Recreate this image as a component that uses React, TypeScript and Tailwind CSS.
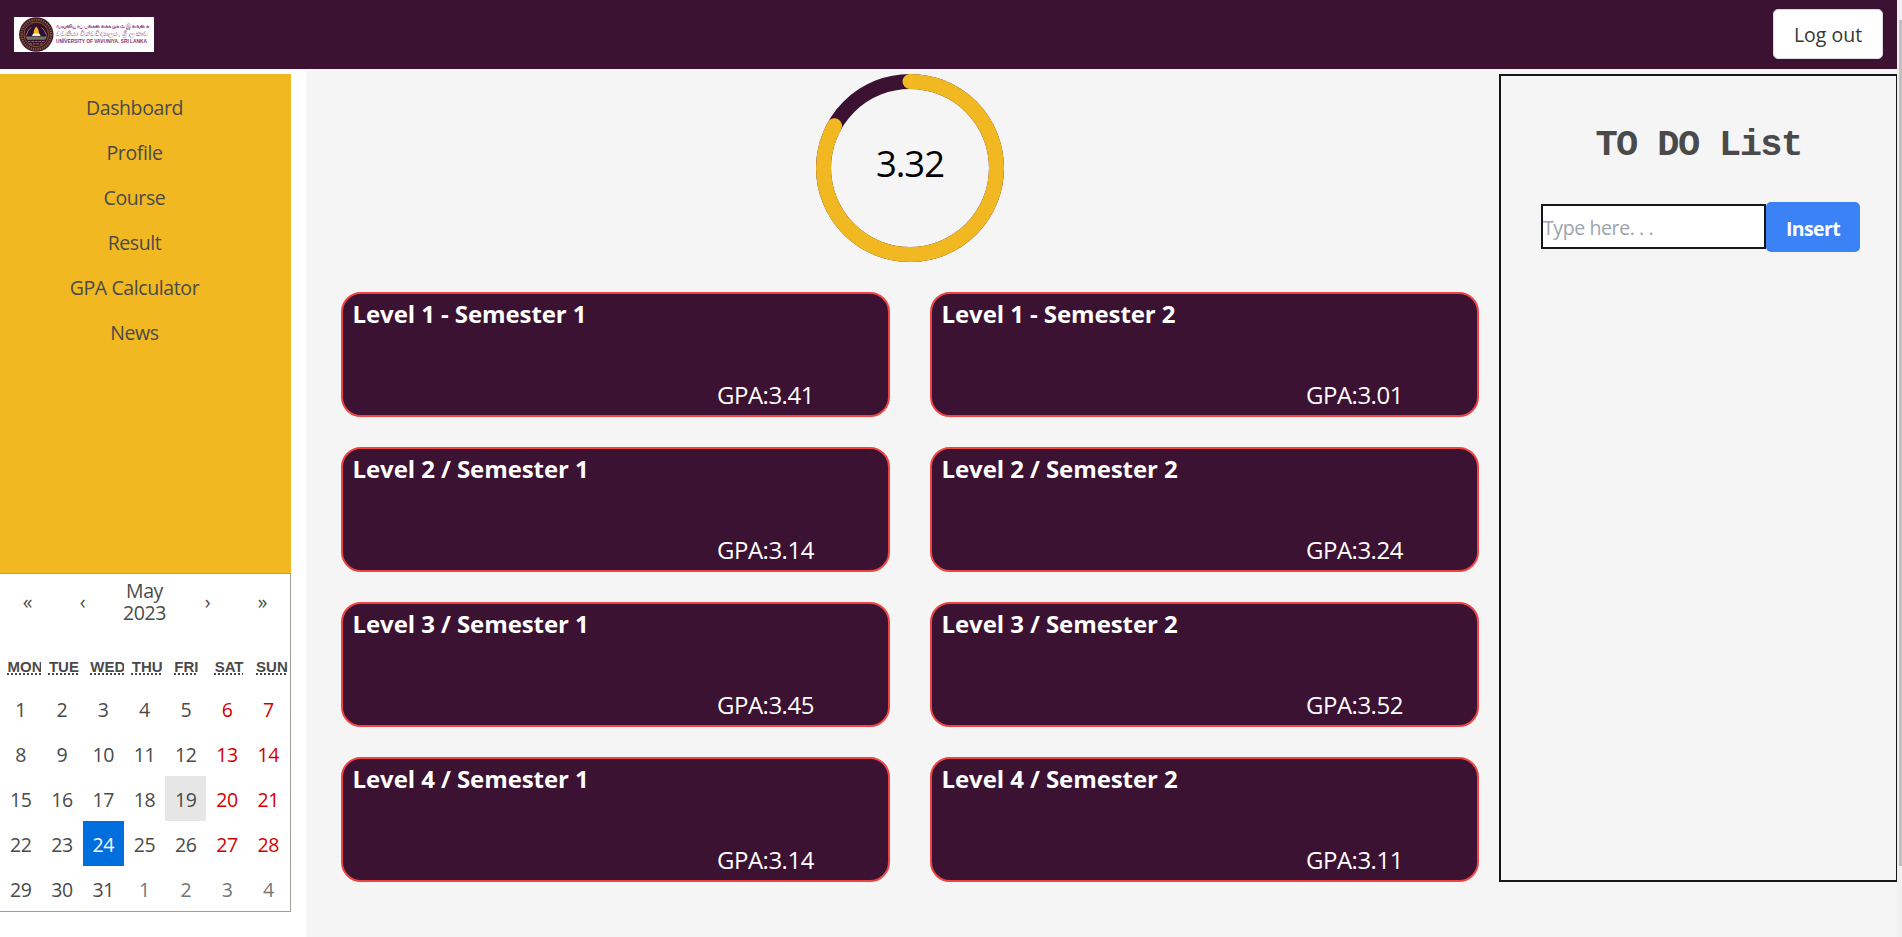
import React from 'react';

const navItems = ['Dashboard', 'Profile', 'Course', 'Result', 'GPA Calculator', 'News'];

const semesters = [
  { title: 'Level 1 - Semester 1', gpa: '3.41' },
  { title: 'Level 1 - Semester 2', gpa: '3.01' },
  { title: 'Level 2 / Semester 1', gpa: '3.14' },
  { title: 'Level 2 / Semester 2', gpa: '3.24' },
  { title: 'Level 3 / Semester 1', gpa: '3.45' },
  { title: 'Level 3 / Semester 2', gpa: '3.52' },
  { title: 'Level 4 / Semester 1', gpa: '3.14' },
  { title: 'Level 4 / Semester 2', gpa: '3.11' },
];

const weekdays = ['MON', 'TUE', 'WED', 'THU', 'FRI', 'SAT', 'SUN'];

const days = Array.from({ length: 35 }, (_, i) => ({
  label: i < 31 ? i + 1 : i - 30,
  outside: i >= 31,
  weekend: i % 7 > 4,
}));

function dayClass(day: { label: number; outside: boolean; weekend: boolean }) {
  if (day.outside) return 'text-[#757575]';
  if (day.label === 24) return 'bg-[#006edc] text-white';
  if (day.label === 19) return 'bg-[#e6e6e6]';
  if (day.weekend) return 'text-[#d10000]';
  return '';
}

function Logo() {
  return (
    <svg width="140" height="35" viewBox="0 0 140 35" className="block bg-white">
      <circle cx="22.3" cy="17.5" r="17.2" fill="#3c1a26" />
      <circle cx="22.3" cy="17.5" r="14.8" fill="none" stroke="#80583c" strokeWidth="2.2" strokeDasharray="1.3 1" />
      <circle cx="22.3" cy="17.5" r="12.3" fill="#3a0f2c" stroke="#94683c" strokeWidth="0.8" />
      <path d="M13 19a9.3 9.3 0 0 1 18.600 0z" fill="#2c1034" />
      <path d="M12 18.500q2-6 5-8M32.600 18.500q-2-6-5-8" fill="none" stroke="#b99a8a" strokeWidth="0.7" />
      <path d="M22.300 9.500c1.700 2.200 2.600 4 2.600 6v2.500h-5.200v-2.500c0-2 .9-3.800 2.600-6z" fill="#f5b820" />
      <path d="M19.200 16.500h6.200l1.200 2.500h-8.600z" fill="#fff3df" />
      <path d="M11.500 19.500h21.600l-1.800 3.300H13.300z" fill="#6d7765" />
      <path d="M14 24.500h16.600M15.500 26.800h13.600" stroke="#8d7440" strokeWidth="1.200" strokeDasharray="2.500 1" />
      <g fill="#86306f" className="tracking-normal">
        <text x="42" y="11" fontSize="5.6" fontWeight="700" textLength="93" lengthAdjust="spacingAndGlyphs">
          வவுனியாப் பல்கலைக்கழகம், இலங்கை
        </text>
        <text x="42" y="18.800" fontSize="6.6" textLength="92" lengthAdjust="spacingAndGlyphs">
          වවුනියා විශ්වවිද්‍යාලය, ශ්‍රී ලංකාව
        </text>
        <text x="42" y="26.200" fontSize="5.200" fontWeight="700" textLength="91" lengthAdjust="spacingAndGlyphs" className="font-['Liberation_Sans',sans-serif]">
          UNIVERSITY OF VAVUNIYA, SRI LANKA
        </text>
      </g>
    </svg>
  );
}

function Calendar() {
  return (
    <section className="h-[339px] border border-l-0 border-[#a0a096] bg-white">
      <div className="mb-5 grid h-[55px] grid-cols-[55px_55px_70px_55px_55px] items-center text-center">
        <button className="pt-px">«</button>
        <button className="pt-px">‹</button>
        <button className="flex flex-col items-center pt-px pr-px leading-[22px]">
          <span>May</span>
          <span>2023</span>
        </button>
        <button className="pt-px">›</button>
        <button className="pt-px">»</button>
      </div>
      <div className="grid h-[37px] grid-cols-7 text-center font-['Liberation_Sans',sans-serif] text-[15px] leading-[22px] font-bold tracking-normal">
        {weekdays.map((d) => (
          <div key={d} className="overflow-hidden px-[7.5px] pt-[7px]">
            <abbr className="underline decoration-dotted decoration-[1.5px] underline-offset-1">{d}</abbr>
          </div>
        ))}
      </div>
      <div className="grid w-[289px] auto-rows-[45px] grid-cols-7 text-center leading-[43px]">
        {days.map((day, i) => (
          <div key={i} className={`pt-0.5 ${dayClass(day)}`}>
            {day.label}
          </div>
        ))}
      </div>
    </section>
  );
}

function GpaRing({ gpa }: { gpa: number }) {
  const circumference = 2 * Math.PI * 86.5;
  return (
    <div className="grid size-[188px] place-items-center">
      <svg viewBox="0 0 188 188" className="col-start-1 row-start-1 size-full -rotate-90">
        <circle cx="94" cy="94" r="86.5" fill="none" stroke="#3b1232" strokeWidth="15" />
        <circle
          cx="94"
          cy="94"
          r="86.5"
          fill="none"
          stroke="#f1b821"
          strokeWidth="15"
          strokeLinecap="round"
          strokeDasharray={`${(circumference * gpa) / 4} ${circumference}`}
        />
      </svg>
      <span className="col-start-1 row-start-1 -mt-2.5 text-[36.5px] leading-none font-[380] tracking-[-1px] text-black">
        {gpa}
      </span>
    </div>
  );
}

export default function App() {
  return (
    <div className="flex h-[937px] overflow-hidden bg-[#f5f5f5] font-['Open_Sans','Noto_Sans',sans-serif] text-[19.5px] tracking-[-0.4px] text-[#4a4a4a]">
      <div className="flex w-[1897px] flex-col">
        <header className="flex h-[69px] shrink-0 items-center justify-between bg-[#3b1232] pr-3.5 pl-3.5">
          <Logo />
          <button className="mb-px h-[50px] w-[110px] rounded-[5px] border border-[#dbdbdb] bg-white pt-0.5 tracking-normal text-[#363636]">
            Log out
          </button>
        </header>
        <div className="flex flex-1">
          <aside className="w-[306px] border-t-2 border-[#f8f8f8] bg-white pt-[3px] pr-[15px]">
            <nav className="flex h-[499px] flex-col bg-[#f1b821] pt-[11px] pr-[22px]">
              {navItems.map((item) => (
                <a key={item} className="block h-[45px] text-center leading-[45px]">
                  {item}
                </a>
              ))}
            </nav>
            <Calendar />
          </aside>
          <main className="flex w-[1193px] flex-col items-center pt-[5px] pl-[15px]">
            <GpaRing gpa={3.32} />
            <div className="mt-[30px] grid w-[1138px] grid-cols-2 gap-x-10 gap-y-[30px]">
              {semesters.map((s) => (
                <article
                  key={s.title}
                  className="flex h-[125px] flex-col justify-between rounded-[20px] border-2 border-[#ef4444] bg-[#3b1232] pt-[3px] pb-[3px] pl-[9.5px] text-[24px] leading-[34px] text-white"
                >
                  <h2 className="font-bold tracking-[-0.08px]">{s.title}</h2>
                  <p className="pl-[364.5px] tracking-[-0.5px]">GPA:{s.gpa}</p>
                </article>
              ))}
            </div>
          </main>
          <section className="mt-[5px] h-[808px] w-[398px] border-2 border-r border-[#14171a] px-10">
            <h1 className="mt-[47px] text-center font-['Liberation_Mono',monospace] text-[37px] leading-[44px] font-bold tracking-[-1.6px]">
              TO DO List
            </h1>
            <div className="mt-[35px] flex items-start">
              <input
                placeholder="Type here. . ."
                className="mt-0.5 h-[45px] w-[225px] shrink-0 border-2 border-[#14171a] bg-white pt-0.5 placeholder:text-[#9ca3af]"
              />
              <button className="h-[50px] w-[94px] shrink-0 rounded-[5px] bg-[#3b82f6] pt-[3px] font-bold tracking-[-0.6px] text-white">
                Insert
              </button>
            </div>
          </section>
        </div>
      </div>
      <div className="w-[5px] bg-[#f0f0f0] pt-5 pl-0.5">
        <div className="h-[846px] bg-[#c1c1c1]" />
      </div>
    </div>
  );
}
